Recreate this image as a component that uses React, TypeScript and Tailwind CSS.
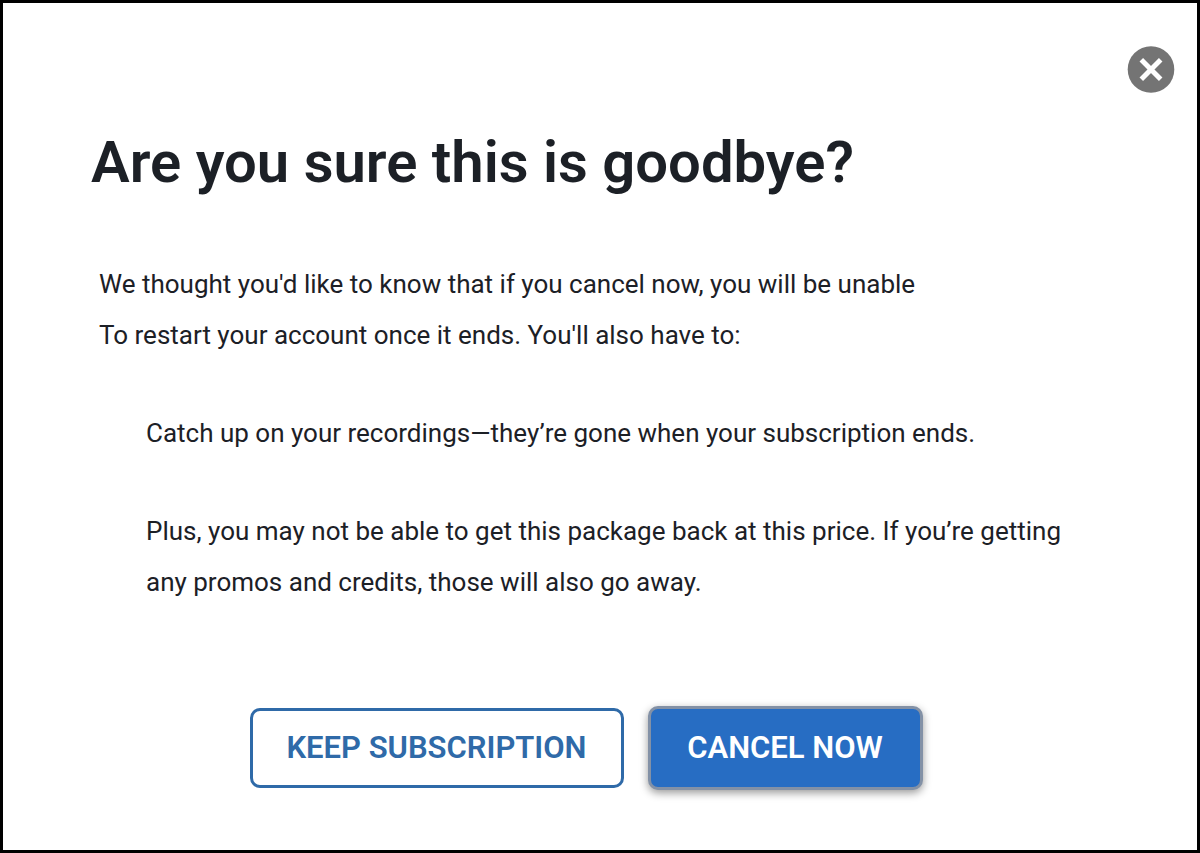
import React from 'react';

const CloseIcon: React.FC = () => (
  <svg viewBox="0 0 48 48" className="w-12 h-12" aria-hidden="true">
    <circle cx="24" cy="24.5" r="23.3" fill="#747474" />
    <path d="M14.3 14.8 L33.7 34.2 M33.7 14.8 L14.3 34.2" stroke="#ffffff" strokeWidth="5" />
  </svg>
);

export default function App() {
  return (
    <main className="min-h-screen border-[3px] border-black bg-white text-[#1c2026] font-['Roboto','Liberation_Sans',sans-serif]">
      <div className="flex justify-end pt-[42px] pr-[22px]">
        <button type="button" aria-label="Close" className="rounded-full">
          <CloseIcon />
        </button>
      </div>

      <div className="pl-24 pr-24">
        <h1 className="-ml-2 mt-[33px] text-[58px] leading-[72px] font-semibold">
          Are you sure this is goodbye?
        </h1>

        <p className="mt-[61px] text-[26px] leading-[51px]">
          We thought you'd like to know that if you cancel now, you will be unable
          <br />
          To restart your account once it ends. You'll also have to:
        </p>

        <ul className="mt-[47px] ml-[47px] space-y-[47px] text-[26px] leading-[51px]">
          <li>Catch up on your recordings—they’re gone when your subscription ends.</li>
          <li>
            Plus, you may not be able to get this package back at this price. If you’re getting
            <br />
            any promos and credits, those will also go away.
          </li>
        </ul>
      </div>

      <div className="mt-[98px] pr-7 flex items-center justify-center gap-6">
        <button
          type="button"
          className="w-[374px] h-20 rounded-[10px] border-[3px] border-[#2f6aa8] bg-white text-[31px] font-semibold text-[#2f6aa8]"
        >
          KEEP SUBSCRIPTION
        </button>
        <button
          type="button"
          className="w-[275px] h-[84px] rounded-[10px] border-[3px] border-[#8391a6] bg-[#276dc3] text-[31px] font-semibold text-white shadow-[0_3px_8px_rgba(0,0,0,0.4)]"
        >
          CANCEL NOW
        </button>
      </div>
    </main>
  );
}
